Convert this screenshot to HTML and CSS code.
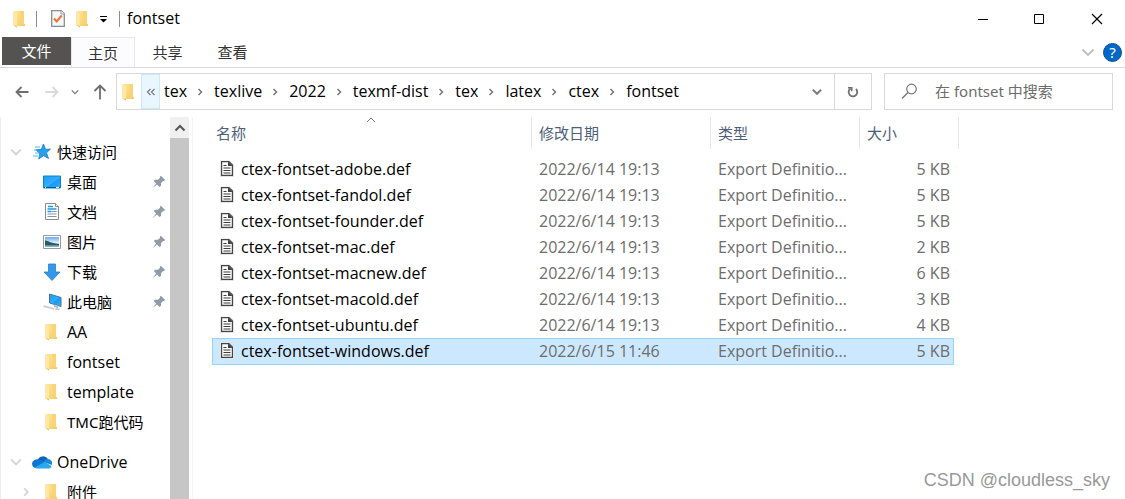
FILE: index.html
```html
<!DOCTYPE html>
<html lang="zh-CN">
<head>
<meta charset="utf-8">
<title>fontset</title>
<link rel="stylesheet" href="styles.css">
</head>
<body>
<svg class="defs" aria-hidden="true">
  <defs>
    <linearGradient id="gold" x1="0" y1="0" x2="1" y2="1"><stop offset="0" stop-color="#ffe69a"/><stop offset="1" stop-color="#f5cb62"/></linearGradient>
    <linearGradient id="screen" x1="0" y1="0" x2="1" y2="1"><stop offset="0" stop-color="#1b9dfb"/><stop offset=".55" stop-color="#33adff"/><stop offset=".56" stop-color="#139bf8"/><stop offset="1" stop-color="#35b0ff"/></linearGradient>
    <linearGradient id="sky" x1="0" y1="0" x2="0" y2="1"><stop offset="0" stop-color="#6da6f0"/><stop offset=".6" stop-color="#e6f3fb"/><stop offset="1" stop-color="#79a9c4"/></linearGradient>
  </defs>
  <symbol id="folder" viewBox="0 0 20 20">
    <path d="M4 2h10v13h1v2H4z" fill="url(#gold)"/>
    <path d="M10 2h4v13h-2z" fill="#f8d476"/>
    <path d="M3 2l4 2.500v14L3 16z" fill="#ffe8a6"/>
    <path d="M3 16l4 2.500V17z" fill="#eabd50"/>
  </symbol>
  <symbol id="file" viewBox="0 0 20 20">
    <path d="M4 2.500h8.500L16 6v11H4z" fill="#fff" stroke="#e4e4e4" stroke-width="2"/>
    <path d="M4.600 2.600h7.300l3.500 3.500v10.300H4.600z" fill="#fff" stroke="#454545" stroke-width="1.200"/>
    <path d="M11 2.500v4.500h4.500z" fill="#3d3d3d"/>
    <path d="M6.500 6.500h3M6.500 9h7M6.500 11.500h7M6.500 14h7" stroke="#3d3d3d" stroke-width="1.100"/>
  </symbol>
  <symbol id="pin" viewBox="0 0 14 14">
    <path d="M8.800.8l4.400 4.300-1.300 1-.7-.2-2.100 2.200-.1 2.700-1.500 1.100-2.500-2.500-4.200 3.700-.2-.2 3.500-4.300L1.800 6l1.300-1.300 2.800.1L8.100 2.700l-.2-.9z" fill="#8f9ba7"/>
  </symbol>
  <symbol id="down" viewBox="0 0 10 10"><path d="M1 3l4 4 4-4" fill="none" stroke="currentColor" stroke-width="1.500"/></symbol>
  <symbol id="right" viewBox="0 0 10 10"><path d="M3.500 2l3 3-3 3" fill="none" stroke="currentColor" stroke-width="1.500"/></symbol>
</svg>

<header>
  <div class="titlebar">
    <svg class="icon"><use href="#folder"/></svg>
    <span class="divider"></span>
    <button class="plain check" aria-label="属性"><svg width="14" height="17" viewBox="0 0 14 17"><path d="M.7.700h9.600l3 3v12.600H.7z" fill="#f5f8fb" stroke="#8d8d8d" stroke-width="1.300"/><path d="M10 .7v3.300h3.300" fill="#fff" stroke="#999"/><path d="M3 8.500l2.700 3 5-6" fill="none" stroke="#ef7130" stroke-width="2"/></svg></button>
    <button class="plain newfolder" aria-label="新建文件夹"><svg class="icon"><use href="#folder"/></svg></button>
    <button class="plain more" aria-label="自定义快速访问工具栏"><svg width="7" height="8" viewBox="0 0 7 8"><path d="M0 1.500h7" stroke="#000"/><path d="M0 4h7L3.500 7.500z"/></svg></button>
    <span class="divider"></span>
    <span class="title latin">fontset</span>
    <div class="window-buttons">
      <button class="plain" aria-label="最小化"><svg width="12" height="12"><path d="M1 6.500h10" stroke="#000"/></svg></button>
      <button class="plain" aria-label="最大化"><svg width="12" height="12"><path d="M.5 1.500h9v9h-9z" fill="none" stroke="#000"/></svg></button>
      <button class="plain" aria-label="关闭"><svg width="12" height="12"><path d="M1 1l10 10M11 1L1 11" stroke="#000" stroke-width="1.200"/></svg></button>
    </div>
  </div>
  <nav class="tabs">
    <button class="tab file-tab">文件</button>
    <button class="tab active">主页</button>
    <button class="tab">共享</button>
    <button class="tab">查看</button>
    <button class="plain expand" aria-label="展开功能区"><svg width="14" height="14" viewBox="0 0 14 14"><path d="M1.500 4.500L7 10l5.500-5.500" fill="none" stroke="#bdbdbd" stroke-width="1.800"/></svg></button>
    <button class="help" aria-label="帮助">?</button>
  </nav>
</header>

<div class="navrow">
  <button class="plain back" aria-label="后退"><svg width="14" height="12" viewBox="0 0 14 12"><path d="M13.500 6H2M6.500 1L1.500 6l5 5" fill="none" stroke="#6f6f6f" stroke-width="1.800"/></svg></button>
  <button class="plain forward" aria-label="前进"><svg width="14" height="12" viewBox="0 0 14 12"><path d="M.5 6H12M7.500 1l5 5-5 5" fill="none" stroke="#d9d9d9" stroke-width="1.800"/></svg></button>
  <button class="plain recent" aria-label="最近位置"><svg width="8" height="8"><use href="#down"/></svg></button>
  <button class="plain up" aria-label="向上"><svg width="14" height="16" viewBox="0 0 14 16"><path d="M7 15.500V2M1.500 7L7 1.500 12.500 7" fill="none" stroke="#6f6f6f" stroke-width="1.800"/></svg></button>
  <div class="address latin">
    <svg class="icon"><use href="#folder"/></svg>
    <button class="overflow" aria-label="更多"><svg width="10" height="8" viewBox="0 0 10 8"><path d="M4.500 1l-3 3 3 3M8.500 1l-3 3 3 3" fill="none" stroke="#777" stroke-width="1.200"/></svg></button>
    <a href="#">tex</a><svg class="chev"><use href="#right"/></svg>
    <a href="#">texlive</a><svg class="chev"><use href="#right"/></svg>
    <a href="#">2022</a><svg class="chev"><use href="#right"/></svg>
    <a href="#">texmf-dist</a><svg class="chev"><use href="#right"/></svg>
    <a href="#">tex</a><svg class="chev"><use href="#right"/></svg>
    <a href="#">latex</a><svg class="chev"><use href="#right"/></svg>
    <a href="#">ctex</a><svg class="chev"><use href="#right"/></svg>
    <a href="#">fontset</a>
    <button class="plain history" aria-label="历史记录"><svg width="12" height="12" viewBox="0 0 10 10"><path d="M1.500 3L5 6.500 8.500 3" fill="none" stroke="#777" stroke-width="1.600"/></svg></button>
    <button class="plain refresh" aria-label="刷新"><svg width="12" height="14" viewBox="0 0 12 14"><path d="M3.500 3.500a4.300 4.300 0 1 0 5.500.5" fill="none" stroke="#6f6f6f" stroke-width="1.800"/><path d="M1 2.700h3.700v3.600" fill="none" stroke="#6f6f6f" stroke-width="1.600"/></svg></button>
  </div>
  <label class="search"><svg width="17" height="17" viewBox="0 0 17 17"><circle cx="10.500" cy="6" r="4.800" fill="none" stroke="#777" stroke-width="1.200"/><path d="M7 9.500L1 15.500" stroke="#777" stroke-width="1.400"/></svg><input type="text" aria-label="搜索" placeholder="在 fontset 中搜索"></label>
</div>

<div class="content">
  <aside class="sidebar">
    <ul class="tree">
      <li class="root"><svg class="twisty"><use href="#down"/></svg><svg class="icon" viewBox="0 0 20 20"><path d="M11.500 2l2 5.300 5-.2-4 3.700 2 5.700-5-2.800L6.700 17l1.200-5.200L4 7.700l5.200-.2z" fill="#25a0ee" stroke="#1679c9" stroke-width=".8"/><path d="M3 5h5M2 8h3M3 11h4M1 14h5" stroke="#57b6f3" stroke-width="1"/></svg><span>快速访问</span></li>
      <li><svg class="icon" viewBox="0 0 20 20"><path d="M1.500 4h17v12h-17z" fill="url(#screen)" stroke="#1280c9"/><path d="M2 15.500h16" stroke="#08578f"/><path d="M3 15.500h1M14 15.500h3" stroke="#fff"/></svg><span>桌面</span><svg class="pin"><use href="#pin"/></svg></li>
      <li><svg class="icon" viewBox="0 0 20 20"><path d="M3.500 1.500h10l3 3v13h-13z" fill="#fff" stroke="#8b8b8b"/><path d="M13.500 1.500v3h3" fill="#eee" stroke="#8b8b8b"/><path d="M6 4.500h5M5.500 7h9M5.500 9.500h4" stroke="#2493dd" stroke-width="1.400"/><path d="M10 9.500h4.500M5.500 12h9M5.500 14.500h9" stroke="#8295a4"/></svg><span>文档</span><svg class="pin"><use href="#pin"/></svg></li>
      <li><svg class="icon" viewBox="0 0 20 20"><path d="M1.500 3.500h17v13h-17z" fill="#fff" stroke="#9a9a9a"/><path d="M3 5h14v10H3z" fill="url(#sky)"/><path d="M3 8.500c3 0 5 2.500 14 3.500v1.500H3z" fill="#285d61"/></svg><span>图片</span><svg class="pin"><use href="#pin"/></svg></li>
      <li><svg class="icon" viewBox="0 0 20 20"><path d="M6.500 2h7v8h4.500L10 18.500 2 10h4.500z" fill="#3697ea" stroke="#2681d0" stroke-width=".8"/></svg><span>下载</span><svg class="pin"><use href="#pin"/></svg></li>
      <li><svg class="icon" viewBox="0 0 20 20"><path d="M7.500 2L19 5.500v9L7.500 11z" fill="url(#screen)" stroke="#4d7594"/><path d="M12 12.500v2.500l4 1.500v-3" fill="#b8c0c7"/><path d="M2 13l11 3-1 2-11.500-3z" fill="#c7ced4" stroke="#fff" stroke-width=".5"/><path d="M14 16l4 .8-1 1.500-4-.8z" fill="#bcc5cc"/></svg><span>此电脑</span><svg class="pin"><use href="#pin"/></svg></li>
      <li><svg class="icon"><use href="#folder"/></svg><span class="latin">AA</span></li>
      <li><svg class="icon"><use href="#folder"/></svg><span class="latin">fontset</span></li>
      <li><svg class="icon"><use href="#folder"/></svg><span class="latin">template</span></li>
      <li><svg class="icon"><use href="#folder"/></svg><span>TMC跑代码</span></li>
      <li class="root second"><svg class="twisty"><use href="#down"/></svg><svg class="icon" viewBox="0 0 20 20"><path d="M5.500 8A6 6 0 0 1 16 7l-4 5z" fill="#0d63b8"/><path d="M4 16a4.200 4.200 0 0 1-1.500-8 6 6 0 0 1 6 0L17 13l-8 3z" fill="#0a77d2"/><path d="M11 10a6 6 0 0 1 5-3 4.500 4.500 0 0 1 4 6z" fill="#1788dc"/><path d="M2.500 15.500l10-5.500 7 4a2.800 2.800 0 0 1-2 2.500H5a4 4 0 0 1-2.500-1z" fill="#2aa8ed"/></svg><span class="latin">OneDrive</span></li>
      <li class="child"><svg class="twisty"><use href="#right"/></svg><svg class="icon"><use href="#folder"/></svg><span>附件</span></li>
    </ul>
    <div class="scrollbar"><button class="plain scroll-up" aria-label="向上滚动"><svg width="12" height="10" viewBox="0 0 12 10"><path d="M1.500 7.500L6 3l4.500 4.500" fill="none" stroke="#555" stroke-width="2"/></svg></button></div>
  </aside>

  <main>
    <table>
      <colgroup><col class="c-name"><col class="c-date"><col class="c-type"><col class="c-size"><col class="c-end"></colgroup>
      <thead><tr><th>名称<svg class="sort" width="10" height="6"><path d="M1 5l4-4 4 4" fill="none" stroke="#777"/></svg></th><th>修改日期</th><th>类型</th><th colspan="2">大小</th></tr></thead>
      <tbody class="latin">
        <tr><td><div class="name"><svg class="icon"><use href="#file"/></svg>ctex-fontset-adobe.def</div></td><td>2022/6/14 19:13</td><td>Export Definitio...</td><td>5 KB</td></tr>
        <tr><td><div class="name"><svg class="icon"><use href="#file"/></svg>ctex-fontset-fandol.def</div></td><td>2022/6/14 19:13</td><td>Export Definitio...</td><td>5 KB</td></tr>
        <tr><td><div class="name"><svg class="icon"><use href="#file"/></svg>ctex-fontset-founder.def</div></td><td>2022/6/14 19:13</td><td>Export Definitio...</td><td>5 KB</td></tr>
        <tr><td><div class="name"><svg class="icon"><use href="#file"/></svg>ctex-fontset-mac.def</div></td><td>2022/6/14 19:13</td><td>Export Definitio...</td><td>2 KB</td></tr>
        <tr><td><div class="name"><svg class="icon"><use href="#file"/></svg>ctex-fontset-macnew.def</div></td><td>2022/6/14 19:13</td><td>Export Definitio...</td><td>6 KB</td></tr>
        <tr><td><div class="name"><svg class="icon"><use href="#file"/></svg>ctex-fontset-macold.def</div></td><td>2022/6/14 19:13</td><td>Export Definitio...</td><td>3 KB</td></tr>
        <tr><td><div class="name"><svg class="icon"><use href="#file"/></svg>ctex-fontset-ubuntu.def</div></td><td>2022/6/14 19:13</td><td>Export Definitio...</td><td>4 KB</td></tr>
        <tr class="selected"><td><div class="name"><svg class="icon"><use href="#file"/></svg>ctex-fontset-windows.def</div></td><td>2022/6/15 11:46</td><td>Export Definitio...</td><td>5 KB</td></tr>
      </tbody>
    </table>
  </main>
</div>
<div class="watermark">CSDN @cloudless_sky</div>
</body>
</html>
```

FILE: styles.css
```css
* { box-sizing: border-box; }
body {
  margin: 0;
  height: 100vh;
  overflow: hidden;
  display: flex;
  flex-direction: column;
  background: #fff;
  color: #000;
  font: 15px/20px "Noto Sans", "Noto Sans CJK SC", sans-serif;
}
button, input { font: inherit; color: inherit; }
svg { display: block; flex: none; }
.defs { position: absolute; width: 0; height: 0; }
.icon { width: 20px; height: 20px; }
.latin { font-family: "Open Sans", "Noto Sans CJK SC", sans-serif; font-size: 16px; }
.plain {
  border: 0;
  padding: 0;
  background: none;
  display: flex;
  align-items: center;
  justify-content: center;
}

/* Title bar */
.titlebar { height: 37px; display: flex; align-items: center; padding-left: 10px; }
.divider { width: 1px; height: 16px; background: #8c8c8c; margin-left: 6px; }
.check { margin-left: 14px; }
.newfolder { margin-left: 8px; }
.more { margin-left: 7px; }
.more + .divider { margin-left: 12px; }
.title { margin-left: 7px; padding-bottom: 1px; }
.window-buttons { display: flex; margin-left: auto; }
.window-buttons button { width: 57px; height: 36px; }

/* Ribbon tabs */
.tabs { height: 31px; display: flex; align-items: stretch; padding: 0 3px 0 2px; border-bottom: 1px solid #dadbdc; }
.tab { width: 65px; padding: 0; border: 0; background: none; color: #333; }
.file-tab { width: 69px; margin-bottom: 2px; background: #555351; color: #fff; }
.active { width: 64px; border: 1px solid #e9e9ec; border-bottom: 0; background: #fcfcff; }
.expand { margin-left: auto; width: 16px; }
.help {
  align-self: center;
  width: 19px;
  height: 19px;
  margin-left: 7px;
  padding: 0;
  border: 1px solid #14508c;
  border-radius: 50%;
  background: #0068c8;
  color: #fff;
  line-height: 17px;
}

/* Navigation row */
.navrow { height: 49px; display: flex; align-items: center; padding: 0 12px 2px 15px; }
.forward { margin-left: 16px; }
.recent { margin-left: 12px; color: #777; }
.up { margin-left: 14px; }
.address { flex: 1; height: 37px; display: flex; align-items: center; margin-left: 9px; padding-left: 2px; border: 1px solid #d9d9d9; }
.address a { padding-bottom: 1px; color: inherit; text-decoration: none; }
.overflow {
  width: 19px;
  height: 35px;
  padding: 0;
  margin: 0 4px 0 2px;
  border: 1px solid #cce8ff;
  background: #e9f5ff;
  display: flex;
  align-items: center;
  justify-content: center;
}
.chev { width: 10px; height: 10px; margin: 0 9px 0 8px; color: #777; }
.history { margin-left: auto; width: 35px; height: 35px; }
.refresh { width: 37px; height: 35px; border-left: 1px solid #d9d9d9; }
.search { width: 229px; height: 37px; display: flex; align-items: center; margin-left: 12px; padding-left: 16px; border: 1px solid #d9d9d9; }
.search input { flex: 1; min-width: 0; margin-left: 17px; padding: 0 0 2px; border: 0; outline: 0; }
.search input::placeholder { color: #6d6d6d; opacity: 1; }

/* Folder tree */
.content { flex: 1; min-height: 0; display: flex; }
.sidebar { width: 193px; display: flex; border-right: 1px solid #f3f3f3; border-left: 1px solid #f0f0f0; }
.tree { flex: 1; margin: 0; padding: 20px 0 0; list-style: none; overflow: hidden; }
.tree li { height: 30px; display: flex; align-items: center; padding: 0 4px 0 41px; white-space: nowrap; }
.tree span { margin-left: 5px; }
.tree li.root { padding-left: 9px; }
.tree li.child { padding-left: 19px; }
.tree li.second { margin-top: 10px; }
.twisty { width: 12px; height: 12px; margin-right: 10px; color: #d4d4d4; }
.pin { width: 14px; height: 14px; margin-left: auto; }
.scrollbar { width: 19px; margin-right: 3px; background: #c6c6c6; }
.scroll-up { width: 19px; height: 21px; background: #f0f0f0; }

/* File list */
main { flex: 1; min-width: 0; padding-left: 19px; }
table { width: 747px; border-collapse: separate; border-spacing: 0; table-layout: fixed; }
.c-name { width: 320px; }
.c-date { width: 179px; }
.c-type { width: 149px; }
.c-size { width: 94px; }
.c-end { width: 5px; }
th { position: relative; height: 32px; padding: 0 7px; border-right: 1px solid #e5e5e5; color: #4c607a; font-weight: 400; text-align: left; }
th:first-child { padding-left: 4px; }
.sort { position: absolute; top: 0; left: 50%; margin-left: -6px; }
tbody::before { content: ""; display: block; height: 7px; }
td { height: 26px; padding: 0 7px; color: #6d6d6d; border: 0 solid #99d1ff; white-space: nowrap; }
td:first-child { padding-left: 5px; color: #000; }
td:last-child { padding-right: 4px; text-align: right; }
.name { display: flex; align-items: center; gap: 4px; }
.selected td { height: 27px; padding-bottom: 1px; background: #cce8ff; border-width: 1px 0; }
.selected td:first-child { border-left-width: 1px; padding-left: 4px; }
.selected td:last-child { border-right-width: 1px; padding-right: 3px; }

.watermark {
  position: absolute;
  right: 15px;
  bottom: 8px;
  color: #999;
  font: 18px/22px "Liberation Sans", Arial, sans-serif;
}
```
